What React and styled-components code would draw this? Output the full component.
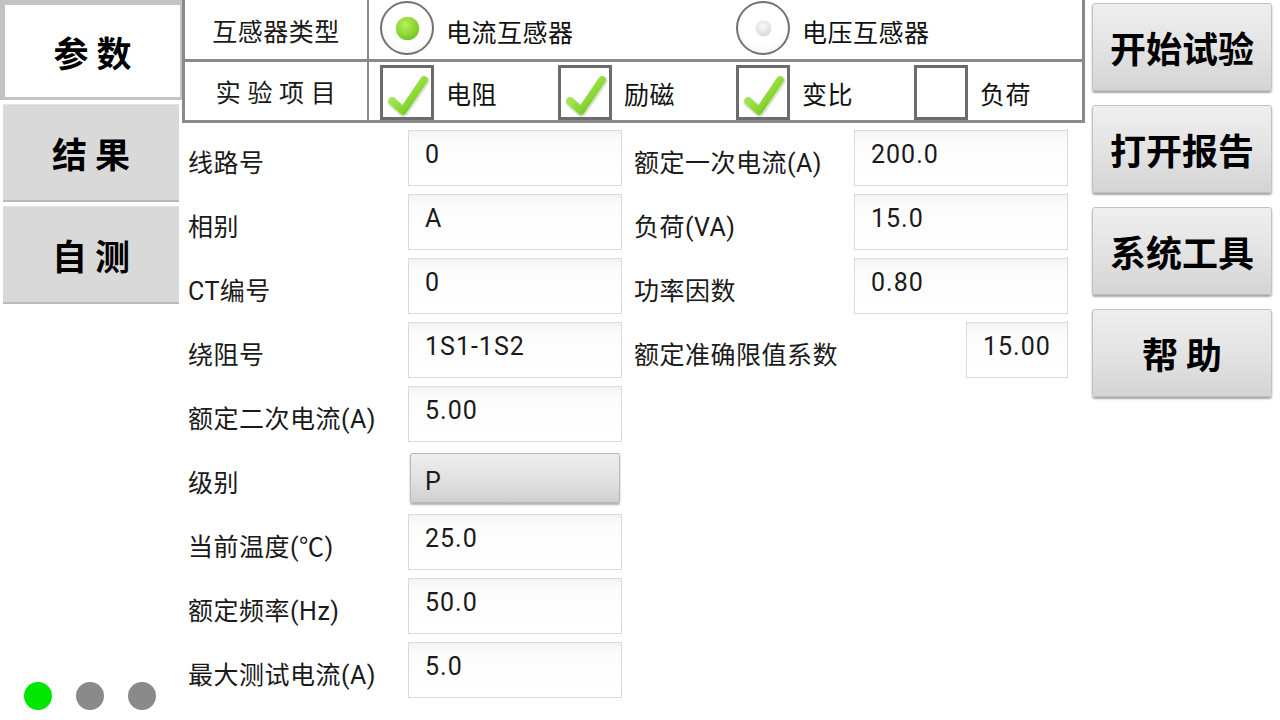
import React from "react";
import styled, { createGlobalStyle } from "styled-components";

const GlobalStyle = createGlobalStyle`
  html, body {
    margin: 0;
    padding: 0;
    background: #ffffff;
  }
  body {
    width: 1280px;
    height: 720px;
    overflow: hidden;
    font-family: Roboto, "Noto Sans CJK SC", sans-serif;
    color: #1a1a1a;
  }
  * {
    box-sizing: border-box;
  }
`;

const Screen = styled.div`
  display: flex;
  width: 1280px;
  height: 720px;
`;

const SideNav = styled.nav`
  width: 182px;
  flex-shrink: 0;
  display: flex;
  flex-direction: column;
`;

const Tab = styled.div`
  display: flex;
  align-items: center;
  justify-content: center;
  font-family: "Noto Sans CJK SC", sans-serif;
  font-weight: 700;
  font-size: 35px;
  color: #000;
  ${(p) =>
    p.$active
      ? `
    height: 100px;
    background: #fff;
    border-style: solid;
    border-color: #c3c3c3;
    border-width: 5px 2px 3px 5px;
  `
      : `
    height: 98px;
    margin: 4px 3px 0 3px;
    background: #d9d9d9;
    border-bottom: 2px solid #bababa;
    border-top: 1px solid #e4e4e4;
  `}
`;

const Dots = styled.div`
  margin-top: auto;
  display: flex;
  gap: 24px;
  padding: 0 0 10px 24px;
`;

const Dot = styled.span`
  width: 28px;
  height: 28px;
  border-radius: 50%;
  background: ${(p) => (p.$on ? "#00e600" : "#8a8a8a")};
`;

const Main = styled.main`
  width: 903px;
  flex-shrink: 0;
  display: flex;
  flex-direction: column;
`;

const OptionTable = styled.div`
  border-left: 3px solid #8a8a8a;
  border-right: 3px solid #8a8a8a;
`;

const OptionRow = styled.div`
  display: flex;
  height: ${(p) => p.$h}px;
  border-bottom: 3px solid #8a8a8a;
`;

const RowLabel = styled.div`
  width: 184px;
  flex-shrink: 0;
  border-right: 2px solid #8a8a8a;
  display: flex;
  align-items: center;
  justify-content: center;
  font-family: "Noto Sans CJK SC", sans-serif;
  font-size: 25px;
  letter-spacing: 0.5px;
  color: #1a1a1a;
  white-space: pre;
`;

const Choices = styled.div`
  flex: 1;
  min-width: 0;
  display: grid;
  grid-template-columns: 178px 178px 178px 1fr;
  padding-left: 11px;
  align-items: center;
`;

const Choice = styled.label`
  grid-column: span ${(p) => p.$span || 1};
  display: flex;
  align-items: center;
  gap: 12px;
  font-family: "Noto Sans CJK SC", sans-serif;
  font-size: 25px;
  letter-spacing: 0.5px;
  color: #111;
`;

const ChoiceText = styled.span`
  padding-top: ${(p) => p.$drop || 2}px;
`;

const RadioRing = styled.span`
  width: 54px;
  height: 54px;
  border-radius: 50%;
  border: 2px solid #727272;
  background: radial-gradient(circle at 50% 40%, #ffffff 55%, #ececec 100%);
  display: flex;
  align-items: center;
  justify-content: center;
  flex-shrink: 0;
  margin-top: -3px;
`;

const RadioDot = styled.span`
  border-radius: 50%;
  ${(p) =>
    p.$checked
      ? `
    width: 23px;
    height: 23px;
    background: radial-gradient(circle at 40% 35%, #b8ee5c 0%, #86d42c 55%, #5eae18 100%);
    box-shadow: 0 0 1px rgba(60, 110, 10, 0.6);
  `
      : `
    width: 15px;
    height: 15px;
    background: radial-gradient(circle at 45% 35%, #fafafa 0%, #dcdcdc 70%, #bdbdbd 100%);
    box-shadow: 0 0 1px rgba(0, 0, 0, 0.35);
  `}
`;

const CheckBox = styled.span`
  width: 54px;
  height: 55px;
  margin-top: 3px;
  border: 3px solid #6c6c6c;
  background: #fff;
  display: flex;
  align-items: center;
  justify-content: center;
  flex-shrink: 0;
`;

const FormArea = styled.div`
  display: flex;
  gap: 12px;
  padding: 7px 0 0 6px;
`;

const FormColumn = styled.div`
  width: 434px;
  display: flex;
  flex-direction: column;
  gap: 8px;
`;

const Field = styled.div`
  display: flex;
  align-items: center;
  height: 56px;
`;

const FieldLabel = styled.span`
  ${(p) => (p.$grow ? "flex: 1;" : "width: 220px;")}
  padding-top: 6px;
  font-family: Roboto, "Noto Sans CJK SC", sans-serif;
  font-size: 25px;
  letter-spacing: 0.5px;
  color: #1a1a1a;
  white-space: nowrap;
`;

const ValueBox = styled.div`
  width: ${(p) => (p.$narrow ? 102 : 214)}px;
  height: 56px;
  border: 1px solid #dadada;
  background: linear-gradient(#f3f3f3, #fcfcfc 18%, #ffffff);
  padding: 11px 0 0 16px;
  font-family: Roboto, sans-serif;
  font-size: 25px;
  line-height: 1;
  letter-spacing: 1px;
  color: #1a1a1a;
`;

const SelectButton = styled.div`
  width: 210px;
  height: 50px;
  margin: 0 0 0 2px;
  border: 1px solid #b8b8b8;
  border-radius: 2px;
  background: linear-gradient(#eeeeee, #e2e2e2 50%, #d0d0d0);
  box-shadow: 0 2px 2px rgba(0, 0, 0, 0.3);
  display: flex;
  align-items: center;
  padding: 6px 0 0 14px;
  font-family: Roboto, sans-serif;
  font-size: 25px;
  color: #1a1a1a;
`;

const SideActions = styled.aside`
  flex: 1;
  display: flex;
  flex-direction: column;
  gap: 14px;
  padding: 3px 0 0 7px;
`;

const ActionButton = styled.button`
  width: 180px;
  height: 88px;
  border: 1px solid #c2c2c2;
  border-radius: 3px;
  background: linear-gradient(#efefef, #e2e2e2 55%, #d4d4d4);
  box-shadow: 0 2px 2px rgba(0, 0, 0, 0.35);
  font-family: "Noto Sans CJK SC", sans-serif;
  font-weight: 700;
  font-size: 36px;
  color: #000;
  white-space: pre;
  padding: 0;
`;

const CheckMark = () => (
  <svg width="48" height="49" viewBox="0 0 48 49">
    <defs>
      <linearGradient id="chk" x1="0" y1="0" x2="1" y2="1">
        <stop offset="0" stopColor="#c2f26e" />
        <stop offset="0.6" stopColor="#8ad832" />
        <stop offset="1" stopColor="#62b01a" />
      </linearGradient>
    </defs>
    <path
      d="M9 33 L20 43 L41 12"
      fill="none"
      stroke="rgba(80,120,40,0.22)"
      strokeWidth="10"
      strokeLinecap="round"
      strokeLinejoin="round"
      transform="translate(0.5 1)"
    />
    <path
      d="M9 33 L20 43 L41 12"
      fill="none"
      stroke="url(#chk)"
      strokeWidth="7.5"
      strokeLinecap="round"
      strokeLinejoin="round"
    />
  </svg>
);

const leftFields = [
  ["线路号", "0"],
  ["相别", "A"],
  ["CT编号", "0"],
  ["绕阻号", "1S1-1S2"],
  ["额定二次电流(A)", "5.00"],
  ["级别", "P", "select"],
  ["当前温度(℃)", "25.0"],
  ["额定频率(Hz)", "50.0"],
  ["最大测试电流(A)", "5.0"],
];

const rightFields = [
  ["额定一次电流(A)", "200.0"],
  ["负荷(VA)", "15.0"],
  ["功率因数", "0.80"],
  ["额定准确限值系数", "15.00", "narrow"],
];

const tests = [
  ["电阻", true],
  ["励磁", true],
  ["变比", true],
  ["负荷", false],
];

export default function App() {
  return (
    <>
      <GlobalStyle />
      <Screen>
        <SideNav>
          <Tab $active>参 数</Tab>
          <Tab>结 果</Tab>
          <Tab>自 测</Tab>
          <Dots>
            <Dot $on />
            <Dot />
            <Dot />
          </Dots>
        </SideNav>

        <Main>
          <OptionTable>
            <OptionRow $h={62}>
              <RowLabel>互感器类型</RowLabel>
              <Choices>
                <Choice $span={2}>
                  <RadioRing>
                    <RadioDot $checked />
                  </RadioRing>
                  <ChoiceText>电流互感器</ChoiceText>
                </Choice>
                <Choice $span={2}>
                  <RadioRing>
                    <RadioDot />
                  </RadioRing>
                  <ChoiceText>电压互感器</ChoiceText>
                </Choice>
              </Choices>
            </OptionRow>
            <OptionRow $h={61}>
              <RowLabel>实 验 项 目</RowLabel>
              <Choices>
                {tests.map(([name, on]) => (
                  <Choice key={name}>
                    <CheckBox>{on && <CheckMark />}</CheckBox>
                    <ChoiceText $drop={3}>{name}</ChoiceText>
                  </Choice>
                ))}
              </Choices>
            </OptionRow>
          </OptionTable>

          <FormArea>
            <FormColumn>
              {leftFields.map(([label, value, kind]) => (
                <Field key={label}>
                  <FieldLabel>{label}</FieldLabel>
                  {kind === "select" ? (
                    <SelectButton>{value}</SelectButton>
                  ) : (
                    <ValueBox>{value}</ValueBox>
                  )}
                </Field>
              ))}
            </FormColumn>
            <FormColumn>
              {rightFields.map(([label, value, kind]) => (
                <Field key={label}>
                  <FieldLabel $grow>{label}</FieldLabel>
                  <ValueBox $narrow={kind === "narrow"}>{value}</ValueBox>
                </Field>
              ))}
            </FormColumn>
          </FormArea>
        </Main>

        <SideActions>
          <ActionButton>开始试验</ActionButton>
          <ActionButton>打开报告</ActionButton>
          <ActionButton>系统工具</ActionButton>
          <ActionButton>帮 助</ActionButton>
        </SideActions>
      </Screen>
    </>
  );
}
